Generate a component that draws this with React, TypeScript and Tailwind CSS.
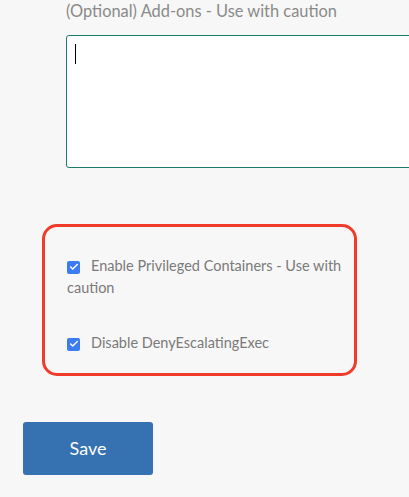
import { Check } from 'lucide-react';

function Checkbox({ label }: { label: string }) {
  return (
    <label className="block text-[14.5px] leading-[22px] text-[#7a7a7a]">
      <span className="mr-[11px] inline-flex h-[13px] w-[13px] translate-y-[1px] items-center justify-center rounded-[2px] bg-[#3b7cf0] align-baseline">
        <Check className="h-[10px] w-[10px] text-white" strokeWidth={3.5} />
      </span>
      {label}
    </label>
  );
}

export default function App() {
  return (
    <div className="h-[497px] w-[409px] overflow-hidden bg-[#f7f7f7] font-['Lato',sans-serif]">
      <div className="pl-[66px]">
        <p className="text-[16.4px] leading-[22px] text-[#8a8a8a]">(Optional) Add-ons - Use with caution</p>
        <div className="mt-[13px] flex h-[133px] w-[360px] rounded-[3px] border border-[#1c7a6c] bg-white pl-[8px] pt-[8px]">
          <div className="h-[20px] w-px bg-black" />
        </div>
      </div>

      <div className="ml-[42px] mt-[56px] w-[315px] rounded-[15px] border-[3px] border-[#f23a2b] pb-[19px] pl-[22px] pr-[8px] pt-[28px]">
        <Checkbox label="Enable Privileged Containers - Use with caution" />
        <div className="h-[33px]" />
        <Checkbox label="Disable DenyEscalatingExec" />
      </div>

      <button
        type="button"
        className="ml-[23px] mt-[46px] h-[53px] w-[130px] rounded-[3px] bg-[#3671b1] text-[18px] text-white"
      >
        Save
      </button>
    </div>
  );
}
